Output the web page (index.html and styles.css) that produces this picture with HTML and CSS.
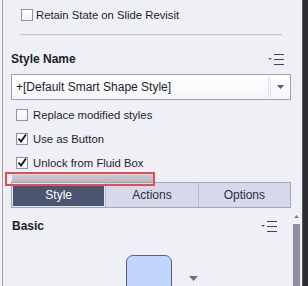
FILE: index.html
```html
<!DOCTYPE html>
<html>
<head>
<meta charset="utf-8">
<link rel="stylesheet" href="styles.css">
</head>
<body>
<div class="frame">
  <div class="panel">
    <label class="check retain"><span class="box"></span><span>Retain State on Slide Revisit</span></label>
    <div class="rule"></div>
    <div class="section-head name-head">
      <span class="title">Style Name</span>
      <svg class="menu-icon" width="17" height="11" viewBox="0 0 17 11"><path d="M0 4h4L2 6z" fill="#5a5f73"/><rect x="6" y="0" width="10" height="1" fill="#3e445b"/><rect x="6" y="5" width="10" height="1" fill="#3e445b"/><rect x="6" y="10" width="10" height="1" fill="#3e445b"/></svg>
    </div>
    <div class="select">
      <span class="select-text">+[Default Smart Shape Style]</span>
      <span class="select-sep"></span>
      <svg class="select-arrow" width="7" height="4" viewBox="0 0 7 4"><path d="M0 0h7L3.5 4z" fill="#555a6e"/></svg>
    </div>
    <div class="checks">
      <label class="check"><span class="box"></span><span>Replace modified styles</span></label>
      <label class="check"><span class="box on"><svg width="12" height="12" viewBox="0 0 12 12"><path d="M2.5 5.5l2.5 3l5-7" fill="none" stroke="#111" stroke-width="1.8"/></svg></span><span>Use as Button</span></label>
      <label class="check"><span class="box on"><svg width="12" height="12" viewBox="0 0 12 12"><path d="M2.5 5.5l2.5 3l5-7" fill="none" stroke="#111" stroke-width="1.8"/></svg></span><span>Unlock from Fluid Box</span></label>
    </div>
    <div class="highlight"><div class="grip"></div></div>
    <div class="tabs">
      <div class="tab active">Style</div>
      <div class="tab">Actions</div>
      <div class="tab">Options</div>
    </div>
    <div class="lower">
      <div class="basic">
        <div class="section-head basic-head">
          <span class="title">Basic</span>
          <svg class="menu-icon" width="17" height="11" viewBox="0 0 17 11"><path d="M0 4h4L2 6z" fill="#5a5f73"/><rect x="6" y="0" width="10" height="1" fill="#3e445b"/><rect x="6" y="5" width="10" height="1" fill="#3e445b"/><rect x="6" y="10" width="10" height="1" fill="#3e445b"/></svg>
        </div>
        <div class="swatch-row">
          <div class="swatch"></div>
          <svg class="swatch-arrow" width="9" height="5" viewBox="0 0 9 5"><path d="M0 0h9L4.5 5z" fill="#6a6f82"/></svg>
        </div>
      </div>
      <div class="scrollbar">
        <svg class="up" width="5" height="3" viewBox="0 0 5 3"><path d="M0 3h5L2.5 0z" fill="#7a7d8c"/></svg>
        <div class="thumb"></div>
      </div>
    </div>
  </div>
  <div class="edge"></div>
</div>
</body>
</html>
```

FILE: styles.css
```css
* { box-sizing: border-box; }
html, body { margin: 0; padding: 0; }
body {
  width: 308px;
  height: 286px;
  overflow: hidden;
  background: #f4f4f7;
  font-family: "Liberation Sans", Arial, sans-serif;
  font-size: 12px;
  color: #1c1f2c;
}
.frame {
  display: flex;
  height: 286px;
  padding-left: 2px;
}
.panel {
  flex: 1;
  background: #eff0f6;
  border-left: 1px solid #9c9fad;
  display: flex;
  flex-direction: column;
  min-width: 0;
}
.edge {
  width: 6px;
  background: #2c2d31;
  border-left: 1px solid #55565c;
}
.check {
  display: flex;
  align-items: center;
  gap: 4px;
  height: 14px;
  line-height: 14px;
  font-size: 11.3px;
  white-space: nowrap;
}
.box {
  width: 12px;
  height: 12px;
  border: 1px solid #8f92a3;
  background: linear-gradient(#ffffff, #f1f2f6);
  display: flex;
  align-items: center;
  justify-content: center;
  flex: none;
}
.box svg { display: block; margin: -1px; }
.retain {
  margin: 8px 0 0 18px;
  gap: 3px;
}
.rule {
  height: 2px;
  margin: 12px 20px 0 17px;
  border-top: 1px solid #c3c6d3;
  border-bottom: 1px solid #e6e8f0;
}
.section-head {
  display: flex;
  align-items: center;
  justify-content: space-between;
}
.title { font-weight: bold; }
.name-head {
  margin: 16px 17px 0 8px;
  height: 14px;
}
.select {
  margin: 8px 11px 0 8px;
  height: 26px;
  border: 1px solid #9da1b4;
  background: linear-gradient(#ffffff, #f4f5f9);
  display: flex;
  align-items: center;
  padding-left: 4px;
}
.select-text { flex: 1; }
.select-sep {
  width: 3px;
  height: 20px;
  border-left: 1px solid #e2e4ec;
  border-right: 1px solid #e2e4ec;
  margin-right: 6px;
}
.select-arrow { margin-right: 6px; }
.checks {
  display: flex;
  flex-direction: column;
  gap: 10px;
  margin: 8px 0 0 13px;
}
.checks .check { gap: 5px; }
.highlight {
  margin: 2px 0 0 2px;
  width: 150px;
  height: 14px;
  border: 2px solid #ea4a4f;
  padding: 0 0 0 5px;
  position: relative;
  z-index: 1;
}
.grip {
  height: 8px;
  background: linear-gradient(#cbccd3, #b6b7bf);
  border-top: 1px solid #d9dadf;
}
.tabs {
  margin: -4px 11px 0 8px;
  height: 26px;
  display: flex;
  border: 1px solid #a2a6bb;
  background: #d6d9ea;
}
.tab {
  flex: 1;
  display: flex;
  align-items: center;
  justify-content: center;
  color: #2a2e40;
  border-left: 1px solid #b5b9cc;
}
.tab:first-child { border-left: none; }
.tab.active {
  background: #4b5571;
  color: #ffffff;
  border: 1px solid #e3e6f1;
}
.lower {
  flex: 1;
  display: flex;
  margin-top: 4px;
  min-height: 0;
}
.basic { flex: 1; }
.basic-head {
  margin: 8px 15px 0 9px;
  height: 12px;
}
.swatch-row {
  display: flex;
  align-items: flex-end;
  margin: 23px 0 0 123px;
}
.swatch {
  width: 46px;
  height: 40px;
  border: 1px solid #596078;
  border-radius: 7px;
  background: #c2d6fc;
}
.swatch-arrow { margin: 0 0 14px 17px; flex: none; }
.scrollbar {
  width: 7px;
  margin-right: 2px;
  display: flex;
  flex-direction: column;
  align-items: center;
  padding-top: 3px;
}
.up { display: block; }
.thumb {
  margin-top: 6px;
  width: 7px;
  flex: 1;
  background: #8e909d;
}
```
